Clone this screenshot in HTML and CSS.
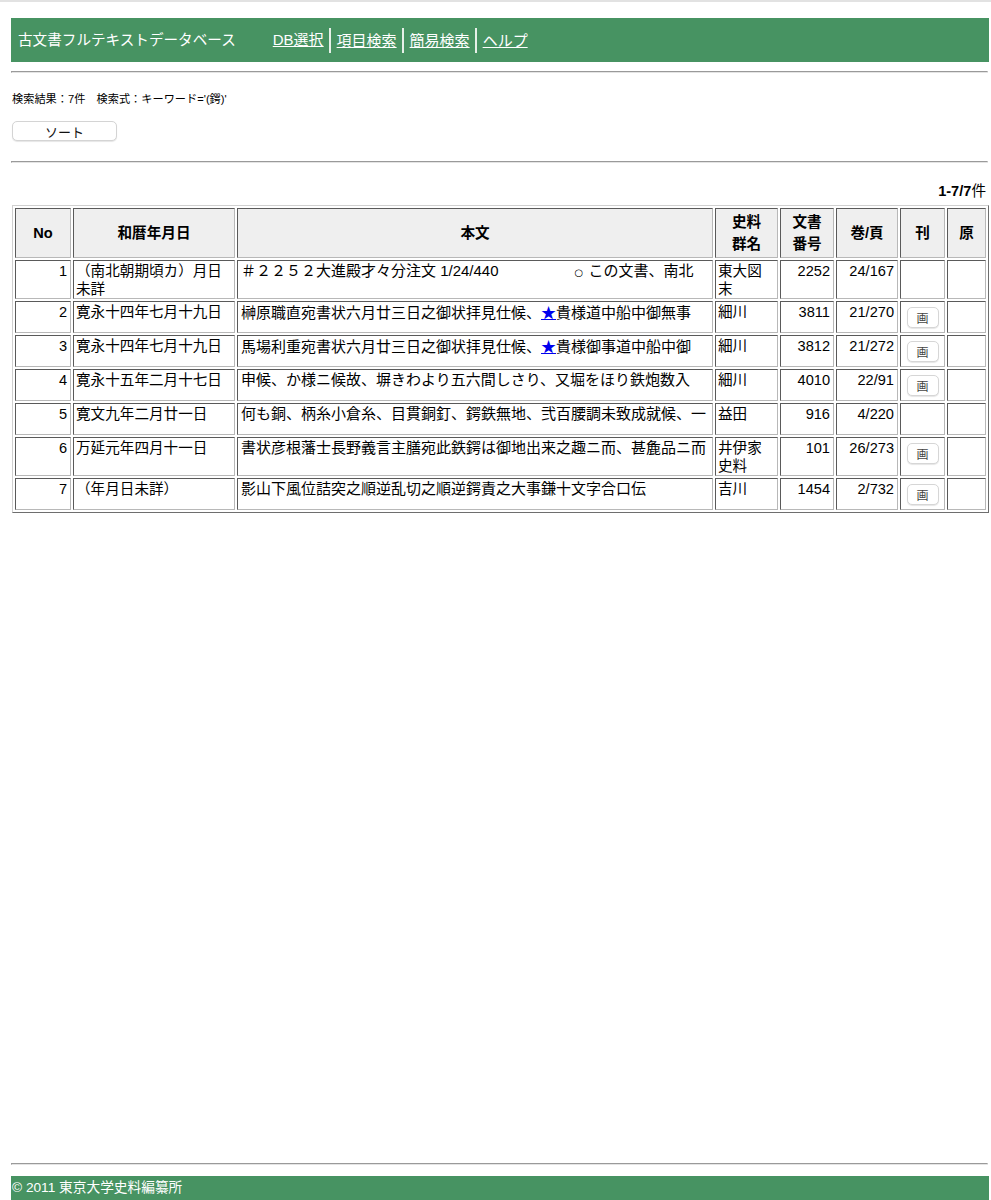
FILE: index.html
```html
<!DOCTYPE html>
<html lang="ja">
<head>
<meta charset="utf-8">
<title>古文書フルテキストデータベース</title>
<link rel="stylesheet" href="styles.css">
</head>
<body>
<div class="topline"></div>
<div class="page">
  <header class="bar">
    <span class="site-title">古文書フルテキストデータベース</span>
    <nav class="nav">
      <a href="#" class="nav-link">DB選択</a>
      <a href="#" class="nav-link">項目検索</a>
      <a href="#" class="nav-link">簡易検索</a>
      <a href="#" class="nav-link">ヘルプ</a>
    </nav>
  </header>
  <hr class="rule rule-top">
  <p class="info">検索結果：7件　検索式：キーワード='(鍔)'</p>
  <button class="sort-btn" type="button">ソート</button>
  <hr class="rule rule-mid">
  <p class="count"><b>1-7/7</b>件</p>
  <table class="results">
    <thead>
      <tr>
        <th class="c-no">No</th>
        <th class="c-date">和暦年月日</th>
        <th class="c-text">本文</th>
        <th class="c-src">史料<br>群名</th>
        <th class="c-num">文書<br>番号</th>
        <th class="c-page">巻/頁</th>
        <th class="c-pub">刊</th>
        <th class="c-orig">原</th>
      </tr>
    </thead>
    <tbody>
      <tr>
        <td class="r">1</td>
        <td>（南北朝期頃カ）月日未詳</td>
        <td class="body-text">＃２２５２大進殿才々分注文 1/24/440　　　　　<span class="circ">○</span>この文書、南北</td>
        <td>東大図<br>末</td>
        <td class="r">2252</td>
        <td class="r">24/167</td>
        <td></td>
        <td></td>
      </tr>
      <tr>
        <td class="r">2</td>
        <td>寛永十四年七月十九日</td>
        <td class="body-text">榊原職直宛書状六月廿三日之御状拝見仕候、<a href="#" class="star">★</a>貴様道中船中御無事</td>
        <td>細川</td>
        <td class="r">3811</td>
        <td class="r">21/270</td>
        <td><button class="img-btn" type="button">画</button></td>
        <td></td>
      </tr>
      <tr>
        <td class="r">3</td>
        <td>寛永十四年七月十九日</td>
        <td class="body-text">馬場利重宛書状六月廿三日之御状拝見仕候、<a href="#" class="star">★</a>貴様御事道中船中御</td>
        <td>細川</td>
        <td class="r">3812</td>
        <td class="r">21/272</td>
        <td><button class="img-btn" type="button">画</button></td>
        <td></td>
      </tr>
      <tr>
        <td class="r">4</td>
        <td>寛永十五年二月十七日</td>
        <td class="body-text">申候、か様ニ候故、塀きわより五六間しさり、又堀をほり鉄炮数入</td>
        <td>細川</td>
        <td class="r">4010</td>
        <td class="r">22/91</td>
        <td><button class="img-btn" type="button">画</button></td>
        <td></td>
      </tr>
      <tr>
        <td class="r">5</td>
        <td>寛文九年二月廿一日</td>
        <td class="body-text">何も銅、柄糸小倉糸、目貫銅釘、鍔鉄無地、弐百腰調未致成就候、一</td>
        <td>益田</td>
        <td class="r">916</td>
        <td class="r">4/220</td>
        <td></td>
        <td></td>
      </tr>
      <tr>
        <td class="r">6</td>
        <td>万延元年四月十一日</td>
        <td class="body-text">書状彦根藩士長野義言主膳宛此鉄鍔は御地出来之趣ニ而、甚麁品ニ而</td>
        <td>井伊家<br>史料</td>
        <td class="r">101</td>
        <td class="r">26/273</td>
        <td><button class="img-btn" type="button">画</button></td>
        <td></td>
      </tr>
      <tr>
        <td class="r">7</td>
        <td>（年月日未詳）</td>
        <td class="body-text">影山下風位詰突之順逆乱切之順逆鍔責之大事鎌十文字合口伝</td>
        <td>吉川</td>
        <td class="r">1454</td>
        <td class="r">2/732</td>
        <td><button class="img-btn" type="button">画</button></td>
        <td></td>
      </tr>
    </tbody>
  </table>
  <footer class="footer">
    <hr class="rule">
    <div class="footer-bar">© 2011 東京大学史料編纂所</div>
  </footer>
</div>
</body>
</html>
```

FILE: styles.css
```css
* { box-sizing: border-box; }

html, body {
  margin: 0;
  padding: 0;
  background: #ffffff;
}

body {
  font-family: "Liberation Sans", "Noto Sans CJK JP", sans-serif;
  font-size: 14.6px;
  color: #000;
}

.topline {
  height: 2px;
  background: #e2e2e2;
}

.page {
  display: flex;
  flex-direction: column;
  align-items: flex-start;
  min-height: 1198px;
  padding: 0 2px 0 11px;
}

.bar {
  width: 978px;
  height: 44px;
  margin-top: 16px;
  background: #479362;
  color: #fff;
  display: flex;
  align-items: center;
  padding-left: 7px;
}

.site-title {
  line-height: 20px;
}

.nav {
  display: flex;
  align-items: center;
  margin-left: 37px;
  font-size: 15px;
}

.nav-link {
  color: #fff;
  text-decoration: underline;
  line-height: 20px;
}

.nav-link + .nav-link {
  border-left: 2px solid #e6f0e8;
  padding-left: 6px;
  margin-left: 5px;
  line-height: 25px;
}

.rule {
  width: 977px;
  height: 2px;
  margin: 0;
  border: 0;
  border-top: 1px solid #9a9a9a;
  border-left: 1px solid #9a9a9a;
  border-bottom: 1px solid #e4e4e4;
  border-right: 1px solid #e4e4e4;
}

.rule-top { margin-top: 9px; }

.info {
  margin: 19px 0 0 1px;
  font-size: 11.2px;
  line-height: 14px;
}

.sort-btn {
  margin: 15px 0 0 1px;
  width: 105px;
  height: 20px;
  padding: 0;
  font-family: "Liberation Sans", "Noto Sans CJK JP", sans-serif;
  font-size: 13px;
  color: #111;
  background: #fff;
  border: 1px solid #d4d4d4;
  border-radius: 5px;
  box-shadow: 0 1px 1px rgba(0,0,0,0.1);
}

.rule-mid { margin-top: 20px; }

.count {
  align-self: stretch;
  text-align: right;
  margin: 19px 3px 0 0;
  line-height: 18px;
}

.results {
  margin: 5px 0 0 1px;
  width: 977px;
  table-layout: fixed;
  border-collapse: separate;
  border-spacing: 2px;
  border: 1px solid;
  border-color: #d0d0d0 #6e6e6e #6e6e6e #d0d0d0;
}

.results th,
.results td {
  border: 1px solid;
  border-color: #5a5a5a #b8b8b8 #b8b8b8 #5a5a5a;
}

.results th {
  height: 50px;
  background: #efefef;
  font-weight: bold;
  text-align: center;
  vertical-align: middle;
  line-height: 22px;
  padding: 0 1px;
}

.results td {
  height: 32px;
  vertical-align: top;
  text-align: left;
  line-height: 18px;
  padding: 1px 2px 0 2px;
  white-space: nowrap;
  overflow: hidden;
}

.results td:nth-child(2),
.results td:nth-child(4) {
  white-space: normal;
}

.results td.body-text {
  font-size: 15px;
  padding-left: 3px;
}

.results td.r {
  text-align: right;
  padding-right: 3px;
}

.c-no { width: 56px; }
.c-date { width: 162px; }
.c-text { width: 476px; }
.c-src { width: 63px; }
.c-num { width: 54px; }
.c-page { width: 62px; }
.c-pub { width: 45px; }
.c-orig { width: 39px; }

.circ {
  display: inline-block;
  width: 15px;
  padding-left: 1px;
  text-align: left;
  font-family: "DejaVu Sans", sans-serif;
  font-size: 10px;
}

.star {
  color: #0000ee;
  text-decoration: underline;
  font-family: "Noto Sans CJK JP", sans-serif;
}

.img-btn {
  display: block;
  margin: 4px auto 0;
  width: 32px;
  height: 21px;
  padding: 0;
  font-family: "Noto Sans CJK JP", sans-serif;
  font-size: 12px;
  color: #444;
  background: #fff;
  border: 1px solid #d6d6d6;
  border-radius: 5px;
  box-shadow: 0 1px 1px rgba(0,0,0,0.1);
}

.footer {
  margin-top: auto;
  padding-top: 20px;
}

.footer-bar {
  width: 978px;
  height: 24px;
  margin-top: 11px;
  background: #479362;
  color: #fff;
  font-size: 13.7px;
  line-height: 24px;
  padding-left: 1px;
}
```
